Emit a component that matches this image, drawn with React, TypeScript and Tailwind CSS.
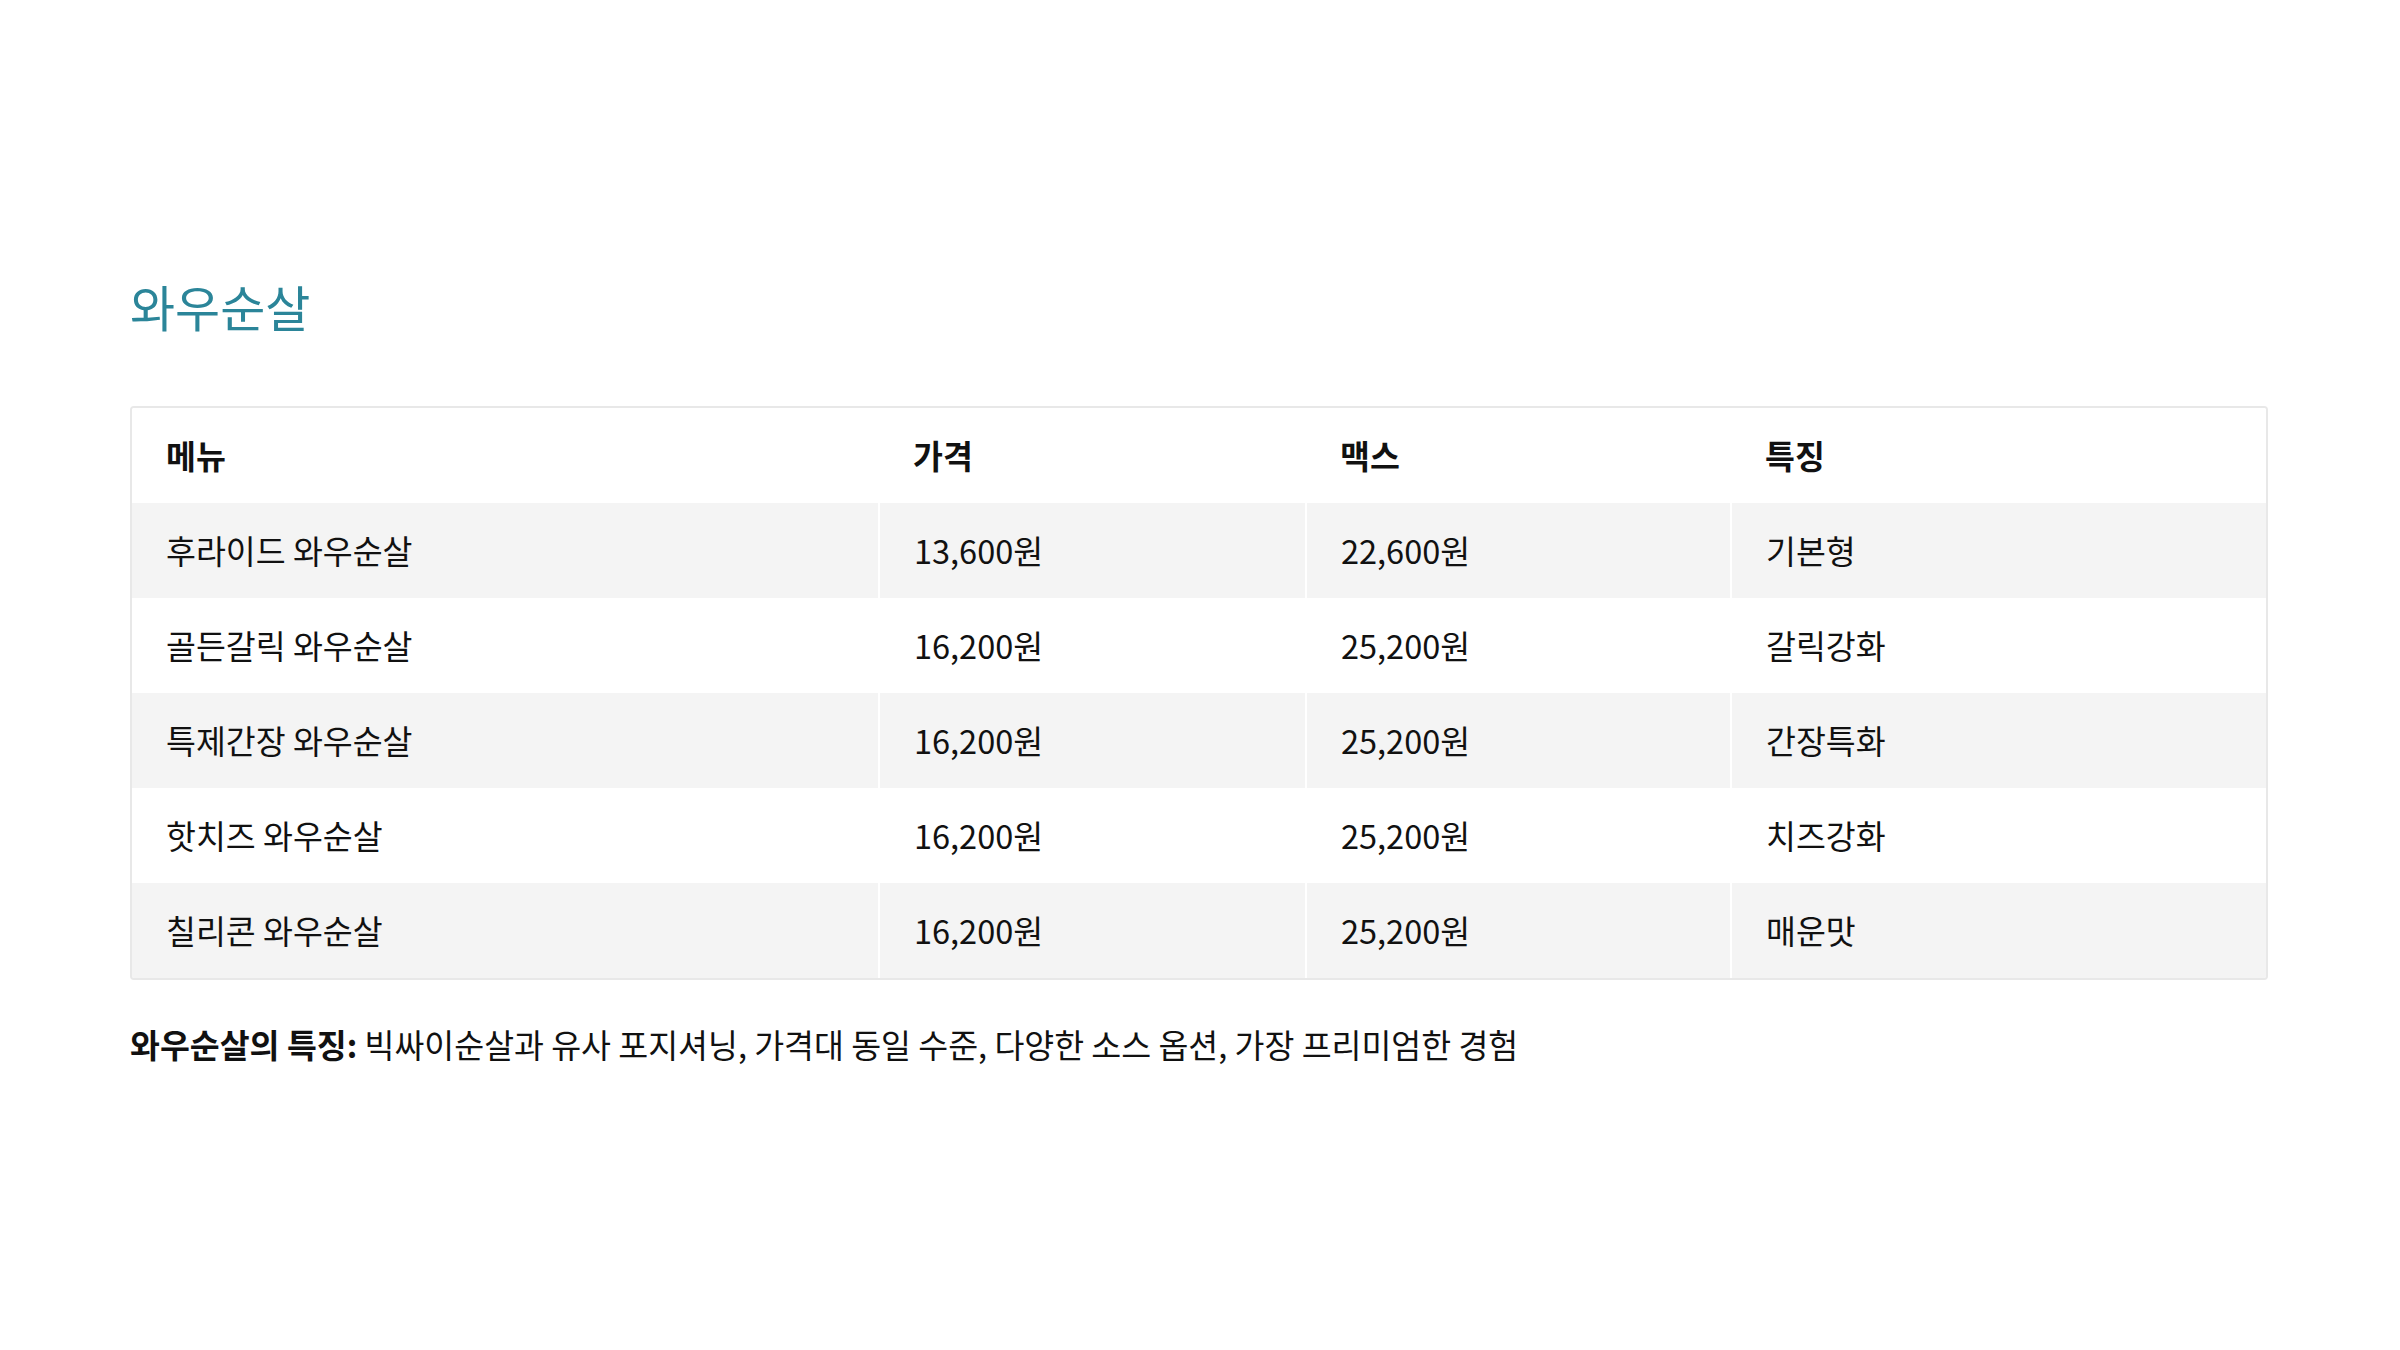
import React from "react";

type Row = {
  name: string;
  price: string;
  max: string;
  note: string;
};

const ROWS: Row[] = [
  { name: "후라이드 와우순살", price: "13,600원", max: "22,600원", note: "기본형" },
  { name: "골든갈릭 와우순살", price: "16,200원", max: "25,200원", note: "갈릭강화" },
  { name: "특제간장 와우순살", price: "16,200원", max: "25,200원", note: "간장특화" },
  { name: "핫치즈 와우순살", price: "16,200원", max: "25,200원", note: "치즈강화" },
  { name: "칠리콘 와우순살", price: "16,200원", max: "25,200원", note: "매운맛" },
];

const HEADERS = ["메뉴", "가격", "맥스", "특징"];

const App = () => {
  return (
    <div
      className="min-h-[1350px] bg-white pl-[130px] pr-[132px] pt-[281px] text-[#111]"
      style={{ fontFamily: '"Noto Sans CJK KR", "Noto Sans", sans-serif' }}
    >
      <h2 className="text-[49px] leading-none font-normal text-[#2b8599]">
        와우순살
      </h2>

      <div className="mt-[76px] overflow-hidden rounded-[4px] border-2 border-[#e8e8e8]">
        <table className="w-full table-fixed border-collapse text-[32.5px]">
          <colgroup>
            <col className="w-[747px]" />
            <col className="w-[427px]" />
            <col className="w-[425px]" />
            <col />
          </colgroup>
          <thead>
            <tr className="h-[95px] bg-white">
              {HEADERS.map((h) => (
                <th key={h} className="px-[34px] text-left font-bold">
                  {h}
                </th>
              ))}
            </tr>
          </thead>
          <tbody>
            {ROWS.map((row, i) => (
              <tr
                key={row.name}
                className={i % 2 === 0 ? "h-[95px] bg-[#f4f4f4]" : "h-[95px] bg-white"}
              >
                <td className="px-[34px]">{row.name}</td>
                <td className="border-l-2 border-white px-[34px]">{row.price}</td>
                <td className="border-l-2 border-white px-[34px]">{row.max}</td>
                <td className="border-l-2 border-white px-[34px]">{row.note}</td>
              </tr>
            ))}
          </tbody>
        </table>
      </div>

      <p className="mt-[40px] text-[32.5px] leading-[1.5]">
        <strong className="font-bold">와우순살의 특징:</strong> 빅싸이순살과 유사
        포지셔닝, 가격대 동일 수준, 다양한 소스 옵션, 가장 프리미엄한 경험
      </p>
    </div>
  );
};

export default App;
